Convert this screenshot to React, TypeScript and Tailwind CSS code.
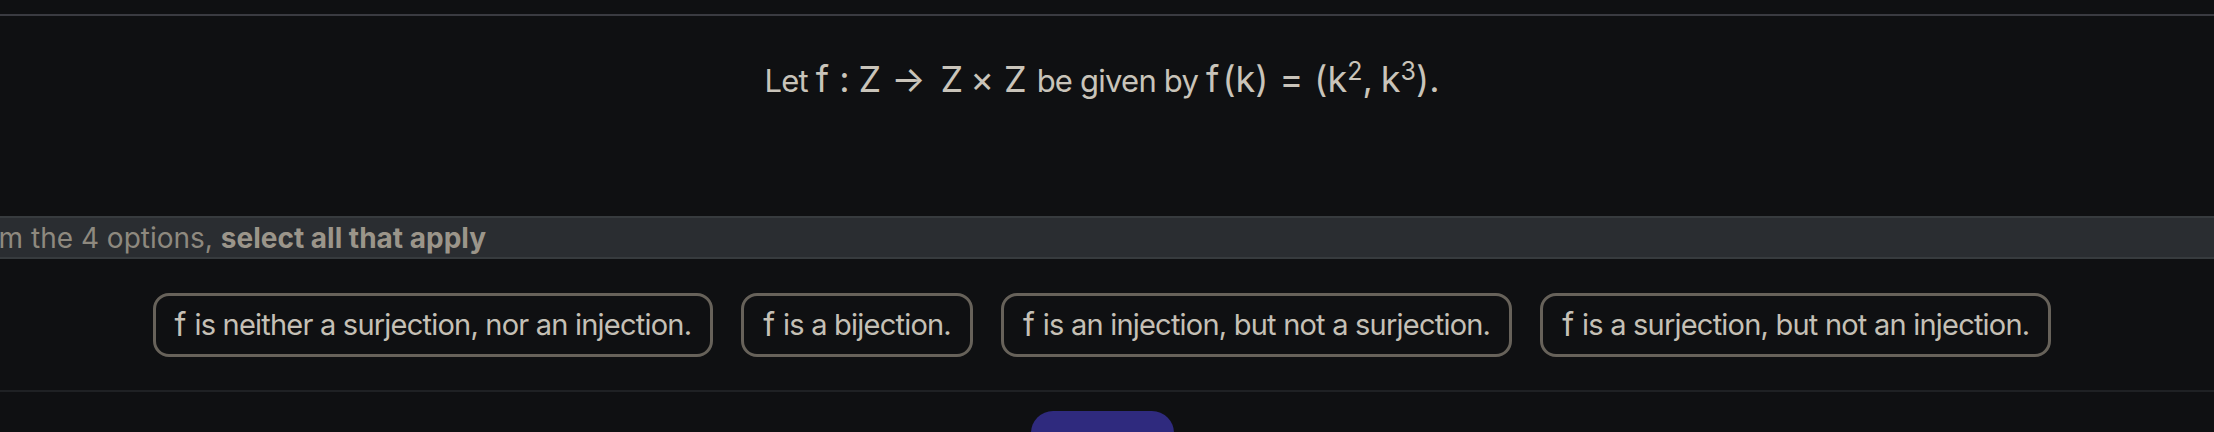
const options = [
  "is neither a surjection, nor an injection.",
  "is a bijection.",
  "is an injection, but not a surjection.",
  "is a surjection, but not an injection.",
];

function MathF() {
  return <span className="mr-[8px] text-[32px] leading-none tracking-normal">f</span>;
}

export default function App() {
  return (
    <div className="h-[432px] w-full overflow-hidden bg-[#0f1012] font-['Inter',sans-serif]">
      <div className="h-[14px]" />

      {/* question */}
      <div className="flex h-[202px] justify-center border-t-2 border-[#3a3b41] pr-[10px] pt-[39px]">
        <p className="text-[31px] leading-[48px] tracking-[-0.025em] text-[#c9c4ba]">
          Let{" "}
          <span className="text-[36px] tracking-normal">
            <span>f</span>
            <span className="ml-[10px]">:</span>
            <span className="ml-[9px]">Z</span>
            <span className="ml-[10px]">→</span>
            <span className="ml-[15px]">Z</span>
            <span className="ml-[7px]">×</span>
            <span className="ml-[10px]">Z</span>
          </span>{" "}
          <span className="ml-[2px]">be given by</span>{" "}
          <span className="text-[36px] tracking-normal">
            <span>f</span>
            <span className="ml-[3px]">(k)</span>
            <span className="mx-[11px]">=</span>
            <span>
              (k<sup className="text-[25px]">2</sup>,
            </span>
            <span className="ml-[8px]">
              k<sup className="text-[25px]">3</sup>).
            </span>
          </span>
        </p>
      </div>

      {/* instruction bar */}
      <div className="flex h-[43px] items-center overflow-hidden border-y-2 border-[#373b3e] bg-[#2a2d31]">
        <p className="ml-[-44px] whitespace-nowrap text-[28px] text-[#8e897f]">
          From the 4 options,{" "}
          <span className="font-bold text-[#9b958a]">select all that apply</span>
        </p>
      </div>

      {/* options */}
      <div className="flex h-[131px] items-center justify-center gap-[28px] pr-[10px]">
        {options.map((o) => (
          <button
            key={o}
            type="button"
            className="flex h-[64px] items-center rounded-[16px] border-[3px] border-[#67625a] px-[19px] text-[29px] tracking-[-0.027em] text-[#c5c0b6]"
          >
            <MathF />
            {o}
          </button>
        ))}
      </div>

      <div className="flex justify-center border-t-2 border-[#1f2124] pr-[10px] pt-[19px]">
        <button
          type="button"
          className="h-[64px] w-[143px] rounded-[22px] bg-[#2f2a7e]"
        />
      </div>
    </div>
  );
}
